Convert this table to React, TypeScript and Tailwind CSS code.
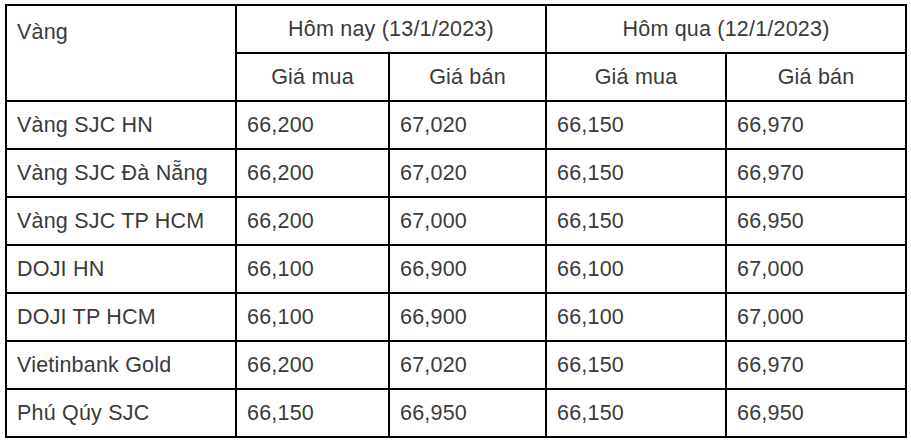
const rows = [
  ["Vàng SJC HN", "66,200", "67,020", "66,150", "66,970"],
  ["Vàng SJC Đà Nẵng", "66,200", "67,020", "66,150", "66,970"],
  ["Vàng SJC TP HCM", "66,200", "67,000", "66,150", "66,950"],
  ["DOJI HN", "66,100", "66,900", "66,100", "67,000"],
  ["DOJI TP HCM", "66,100", "66,900", "66,100", "67,000"],
  ["Vietinbank Gold", "66,200", "67,020", "66,150", "66,970"],
  ["Phú Qúy SJC", "66,150", "66,950", "66,150", "66,950"],
];

export default function App() {
  return (
    <div className="bg-white w-[911px] h-[442px] pl-[5px] pt-[4px] font-['Liberation_Sans',Arial,sans-serif] text-[21.5px] tracking-[0.2px] text-[#3a3a3a]">
      <table className="table-fixed border-collapse border-2 border-black w-[902px]">
        <colgroup>
          <col className="w-[230px]" />
          <col className="w-[153px]" />
          <col className="w-[157px]" />
          <col className="w-[180px]" />
          <col className="w-[180px]" />
        </colgroup>
        <thead>
          <tr className="h-[48px]">
            <th rowSpan={2} className="border-2 border-black align-top text-left font-normal px-[10px] pt-[10px]">
              Vàng
            </th>
            <th colSpan={2} className="border-2 border-black font-normal text-center">
              Hôm nay (13/1/2023)
            </th>
            <th colSpan={2} className="border-2 border-black font-normal text-center">
              Hôm qua (12/1/2023)
            </th>
          </tr>
          <tr className="h-[48px]">
            <th className="border-2 border-black font-normal text-center">Giá mua</th>
            <th className="border-2 border-black font-normal text-center">Giá bán</th>
            <th className="border-2 border-black font-normal text-center">Giá mua</th>
            <th className="border-2 border-black font-normal text-center">Giá bán</th>
          </tr>
        </thead>
        <tbody>
          {rows.map((r) => (
            <tr key={r[0]} className="h-[48px]">
              {r.map((c, i) => (
                <td key={i} className="border-2 border-black px-[10px] whitespace-nowrap">
                  {c}
                </td>
              ))}
            </tr>
          ))}
        </tbody>
      </table>
    </div>
  );
}
